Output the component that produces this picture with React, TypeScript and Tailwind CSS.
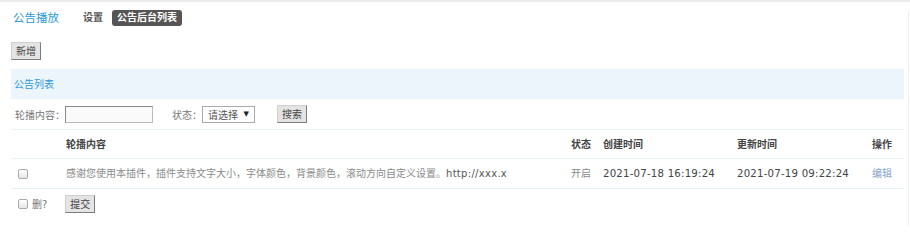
import React from "react";

const font = { fontFamily: '"DejaVu Sans", "Noto Sans CJK SC", sans-serif' };
const cjk = { fontFamily: '"Noto Sans CJK SC", sans-serif' };

function Box() {
  return (
    <span className="inline-block w-[10px] h-[10px] rounded-[2px] border border-[#a9a9a9] bg-gradient-to-b from-white to-[#e6e6e6]" />
  );
}

function Btn({ children }: { children: React.ReactNode }) {
  return (
    <span
      className="flex items-center justify-center h-[18px] px-[4px] text-[10px] leading-none text-[#444] bg-[#e4e4e4] border border-[#cfcfcf] border-b-[#7d7d7d] border-r-[#7d7d7d]"
      style={cjk}
    >
      {children}
    </span>
  );
}

export default function App() {
  return (
    <div className="w-[910px] h-[226px] bg-white overflow-hidden border-t-2 border-[#ececec]" style={font}>
      <div className="w-[909px] h-full border-r border-[#f2f2f2]">
        {/* nav */}
        <div className="flex items-center h-[16px] mt-[8px] pl-[13px]">
          <span className="text-[11.5px] text-[#2b9ad6] leading-none pt-[2px]">公告播放</span>
          <span className="ml-[24px] text-[10px] font-bold text-[#555] leading-none">设置</span>
          <span className="ml-[9px] h-[16px] px-[5px] inline-flex items-center rounded-[3px] bg-[#555] text-white text-[10px] font-bold leading-none">
            公告后台列表
          </span>
        </div>

        <div className="flex pl-[11px] mt-[16px]">
          <Btn>新增</Btn>
        </div>

        <div className="ml-[11px] w-[893px]">
          <div className="mt-[9px] h-[30px] bg-[#edf5fc] flex items-center pl-[3px] text-[10px] text-[#2b9ad6]">
            公告列表
          </div>

          {/* search row */}
          <div className="h-[31px] flex items-center border-b border-[#e9f1f8] text-[10px] text-[#777] whitespace-nowrap" style={cjk}>
            <span className="ml-[4px] w-[50px] shrink-0">轮播内容：</span>
            <span className="w-[88px] h-[17px] shrink-0 bg-[#fafafa] border border-[#bbb] border-t-[#888] border-l-[#888]" />
            <span className="ml-[19px] w-[30px] shrink-0">状态：</span>
            <span className="w-[53px] h-[17px] shrink-0 bg-white border border-[#aaa] flex items-center justify-between pl-[5px] pr-[5px] text-[#555]">
              <span>请选择</span>
              <span className="text-[7px] text-[#222]" style={{ fontFamily: '"DejaVu Sans", sans-serif' }}>▼</span>
            </span>
            <span className="ml-[22px]">
              <Btn>搜索</Btn>
            </span>
          </div>

          {/* header */}
          <div className="grid grid-cols-[55px_505px_32px_134px_135px_1fr] h-[29px] items-center border-b border-[#e9f1f8] text-[10px] font-bold text-[#444]">
            <span />
            <span>轮播内容</span>
            <span>状态</span>
            <span>创建时间</span>
            <span>更新时间</span>
            <span>操作</span>
          </div>

          {/* data row */}
          <div className="grid grid-cols-[55px_505px_32px_134px_135px_1fr] h-[30px] items-center border-b border-[#e9f1f8] text-[10px]">
            <span className="pl-[7px] flex items-center">
              <Box />
            </span>
            <span className="text-[#8a8a8a] whitespace-nowrap">
              感谢您使用本插件，插件支持文字大小，字体颜色，背景颜色，滚动方向自定义设置。<span className="text-[#555] tracking-[0.3px]">http://xxx.x</span>
            </span>
            <span className="text-[#8a8a8a]">开启</span>
            <span className="text-[#444] tracking-[0.2px] text-[10.2px]">2021-07-18 16:19:24</span>
            <span className="text-[#444] tracking-[0.2px] text-[10.2px]">2021-07-19 09:22:24</span>
            <span className="text-[#86a2c9]">编辑</span>
          </div>

          {/* footer */}
          <div className="flex items-center pt-[6px] text-[10px]">
            <span className="pl-[7px] flex items-center">
              <Box />
            </span>
            <span className="ml-[4px] text-[#777]">删?</span>
            <span className="ml-[18px]">
              <Btn>提交</Btn>
            </span>
          </div>
        </div>
      </div>
    </div>
  );
}
